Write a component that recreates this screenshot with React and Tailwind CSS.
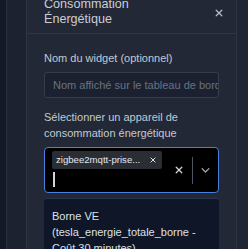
import React from 'react';

const XIcon = ({ className }) => (
  <svg viewBox="0 0 10 10" className={className} fill="none" stroke="currentColor" strokeWidth="1.6" strokeLinecap="round">
    <path d="M1.5 1.5l7 7M8.5 1.5l-7 7" />
  </svg>
);

const Chevron = ({ className }) => (
  <svg viewBox="0 0 12 8" className={className} fill="none" stroke="currentColor" strokeWidth="1.6" strokeLinecap="round" strokeLinejoin="round">
    <path d="M1.5 1.5L6 6l4.5-4.5" />
  </svg>
);

export default function App() {
  return (
    <div className="flex h-[249px] w-[248px] overflow-hidden bg-[#1c2230] font-['Liberation_Sans',Arial,sans-serif]">
      <div className="w-[7px] shrink-0 border-r border-[#2a3140] bg-[#131925]" />
      <div className="w-[19px] shrink-0 bg-[#1c2230]" />

      {/* modal */}
      <div className="flex w-[211px] shrink-0 flex-col border-x border-[#2e3544] bg-[#222836]">
        <div className="-mt-[3px] flex items-start justify-between border-b border-[#2e3544] pb-[6px] pl-[17px] pr-[13px]">
          <h2 className="w-[140px] text-[12.6px] leading-[15px] font-normal text-[#c9ced8]">
            Consommation Énergétique
          </h2>
          <button className="mt-[12px] text-[#b4bac6]">
            <XIcon className="h-[8px] w-[8px]" />
          </button>
        </div>

        <div className="flex flex-col px-[17px] pt-[16px]">
          <label className="text-[11px] leading-[16px] text-[#c3c8d2]">Nom du widget (optionnel)</label>
          <div className="mt-[6px] flex h-[26px] items-center overflow-hidden whitespace-nowrap rounded-[3px] border border-[#363d4b] bg-[#1b2130] px-[8px] text-[11px] text-[#6b7280]">
            Nom affiché sur le tableau de bord
          </div>

          <label className="mt-[11px] text-[11px] leading-[16px] text-[#c3c8d2]">
            Sélectionner un appareil de consommation énergétique
          </label>

          <div className="mt-[6px] flex h-[46px] items-center rounded-[4px] border-[1.5px] border-[#4a7fe0] bg-black">
            <div className="flex flex-1 flex-col items-start gap-[3px] pl-[7px]">
              <div className="-mt-[2px] flex h-[18px] items-center gap-[10px] whitespace-nowrap rounded-[2px] bg-[#2a2d33] pl-[4px] pr-[6px] text-[9.6px] text-[#e5e7eb]">
                <span>zigbee2mqtt-prise...</span>
                <XIcon className="h-[6px] w-[6px] text-[#e5e7eb]" />
              </div>
              <div className="ml-[1px] h-[15px] w-[1.5px] bg-[#d1d5db]" />
            </div>
            <div className="flex items-center">
              <XIcon className="mr-[9px] h-[8px] w-[8px] text-[#d1d5db]" />
              <div className="h-[27px] w-px bg-[#4b5563]" />
              <Chevron className="mx-[8px] h-[7px] w-[9px] text-[#a9afbb]" />
            </div>
          </div>

          <div className="mt-[5px] rounded-[3px] border-t border-[#2a3347] bg-[#0e1628] px-[8px] pt-[9px] text-[11px] leading-[16px] text-[#dde1e8]">
            Borne VE (tesla_energie_totale_borne - Coût 30 minutes)
          </div>
        </div>
      </div>

      <div className="flex-1 bg-[#1f2533]" />
    </div>
  );
}
